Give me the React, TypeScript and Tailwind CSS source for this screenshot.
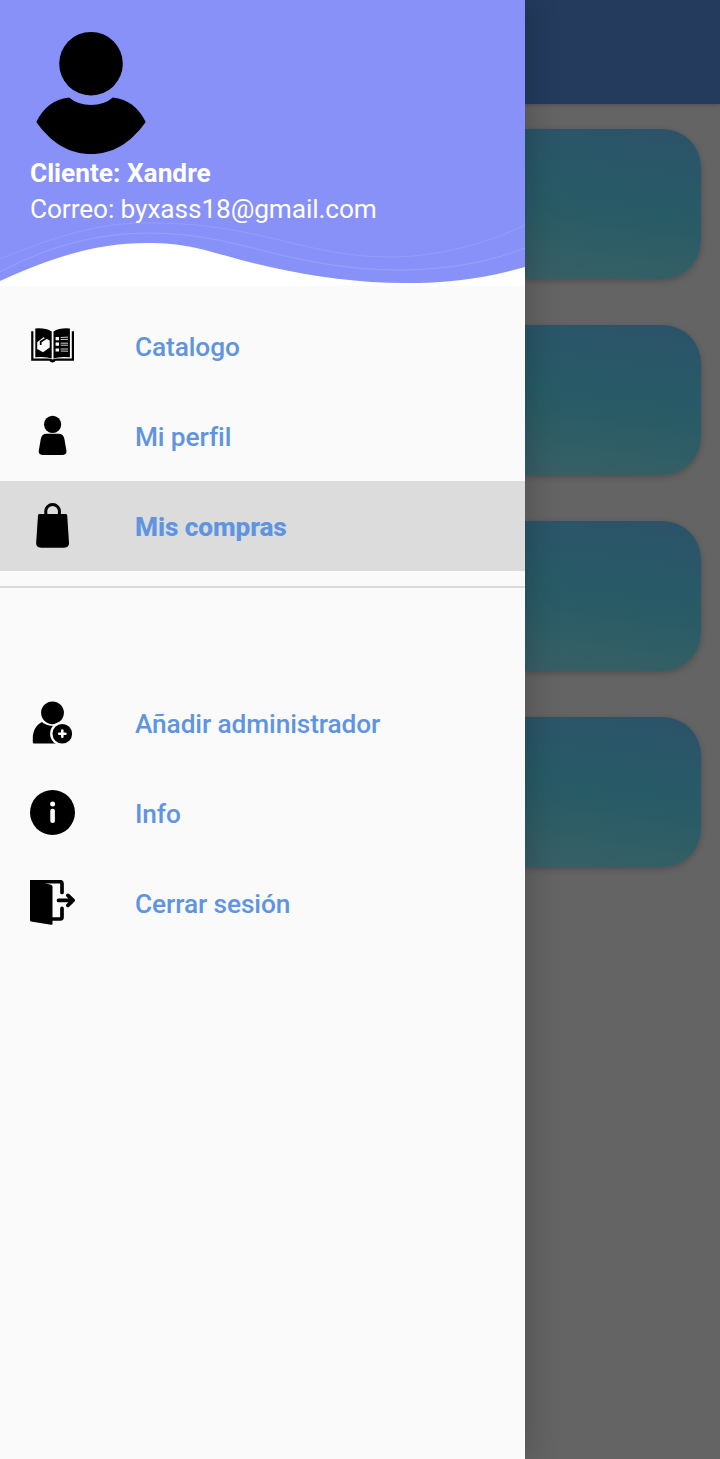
import type { ReactNode } from "react";

const BookIcon = () => (
  <svg className="h-[45px] w-[45px]" viewBox="0 0 45 45">
    <path d="M1.200 8.300h2.200v27.300h14.200q3.500 0 5 .9 1.500-.9 5-.9h14.200V8.300H44v29.500H25.500q-.8 1.600-3 1.600t-3-1.600H1.200z" />
    <path d="M5.300 5.400q10.500-.8 16.400 3.200v27Q16 33.200 5.300 34.300zM39.900 5.400q-10.500-.8-16.400 3.200v27q5.700-2.400 16.400-1.300z" />
    <path fill="#fafafa" d="M7.200 19.200l6.300-4.900 6.200 3.200v7L13 29.300l-5.800-3.400z" />
    <path fill="none" stroke="#000" strokeWidth="1.700" d="M10.700 22v-3.300l6.700-4.200" />
    <path fill="#fafafa" d="M25.600 14h3.400v3.200h-3.400zM25.600 19.600h3.400v3.200h-3.400zM25.600 25.400h3.400v3.200h-3.400z" />
    <path stroke="#cfcfcf" strokeWidth="1" d="M30.700 14.500l7.300-.4M30.700 16.500l7.300-.2M30.700 20.200h7.300M30.700 22.200h7.300M30.700 26h7.300M30.700 28l7.300.2" />
  </svg>
);

const PersonIcon = () => (
  <svg className="h-[45px] w-[45px]" viewBox="0 0 45 45">
    <circle cx="22.600" cy="11.400" r="8.600" />
    <path d="M16.500 20.700h12.200c3.200 0 5 1.800 5.700 5.300l2 11.600c.5 2.800-.9 4.400-3.500 4.400H12.300c-2.600 0-4-1.600-3.500-4.400L10.800 26c.7-3.500 2.500-5.300 5.700-5.300z" />
  </svg>
);

const BagIcon = () => (
  <svg className="h-[45px] w-[45px]" viewBox="0 0 45 45">
    <path fill="none" stroke="#000" strokeWidth="3" d="M15.800 13V8.300a6.800 6.800 0 0 1 13.600 0V13" />
    <path d="M9.600 11h26c1 0 1.500.5 1.600 1.500L39 39.500c.3 3.300-1.600 5.200-5 5.200H11.200c-3.400 0-5.300-1.900-5-5.200L8 12.500c.1-1 .6-1.500 1.600-1.500z" />
  </svg>
);

const AddUserIcon = () => (
  <svg className="h-[45px] w-[45px]" viewBox="0 0 45 45">
    <circle cx="22.500" cy="12.800" r="11.400" />
    <path d="M12 22C6 25 2.800 31 2.800 38.500V42c0 1 .5 1.500 1.500 1.500H26V26c-5.500 0-10-.5-14-4z" />
    <circle cx="32.300" cy="33.700" r="12.200" fill="#fafafa" />
    <circle cx="32.300" cy="33.700" r="9.800" />
    <path stroke="#fafafa" strokeWidth="2.600" strokeLinecap="round" d="M29.200 33.700h6.200M32.300 30.600v6.200" />
  </svg>
);

const InfoIcon = () => (
  <svg className="h-[45px] w-[45px]" viewBox="0 0 45 45">
    <circle cx="22.500" cy="22.500" r="22.500" />
    <circle cx="22.600" cy="14.100" r="2.500" fill="#fafafa" />
    <rect x="20.300" y="18.700" width="4.600" height="14.300" rx="2" fill="#fafafa" />
  </svg>
);

const ExitIcon = () => (
  <svg className="h-[45px] w-[45px]" viewBox="0 0 45 45">
    <path d="M0 0h14l1 3.200 6 1.600q1.500.4 1.500 1.700V44q0 1-1.500.8L1 41.500q-1-.2-1-1.200z" />
    <g fill="none" stroke="#000" strokeWidth="3.700" strokeLinecap="round">
      <path d="M10 1.700h20.300q1.700 0 1.700 1.700V12.500M32 28.300v9q0 1.700-1.700 1.700H22" />
      <path strokeLinejoin="round" d="M28.500 20.400h14.300M37.900 15.400l5.200 5-5.200 5" />
    </g>
  </svg>
);

const Row = ({ icon, label, active = false }: { icon: ReactNode; label: string; active?: boolean }) => (
  <li
    className={
      active
        ? "flex h-[90px] items-start gap-[60px] bg-[#dcdcdc] pl-[30px] pt-[22px] font-extrabold"
        : "flex h-[90px] items-start gap-[60px] pl-[30px] pt-[22px] font-medium"
    }
  >
    {icon}
    <span className="pt-[2px] text-[26.25px] leading-[45px] tracking-[-0.1px] text-[#5f94e1]">{label}</span>
  </li>
);

const Header = () => (
  <header className="relative h-[286px] bg-[#8791f8] pt-[30px] text-white">
    <svg className="absolute bottom-0 left-0 h-[66px] w-[525px]" viewBox="0 220 525 66">
      <path
        fill="#fff"
        d="M0 281C55 256 98 243 148 243S218 256 270 267C315 277 360 283 405 283S485 278 525 267V286H0Z"
      />
      <g fill="none" stroke="#a3acfb" strokeWidth="0.600">
        <path d="M0 272C50 245 100 233 150 233S240 245 285 256C340 268 370 270 405 270C450 269 490 262 525 248" />
        <path strokeOpacity="0.800" d="M0 259C45 241 90 224 140 223S230 228 275 239C320 250 350 257 390 257C440 257 490 242 525 225" />
      </g>
    </svg>
    <svg className="ml-[30px] block h-[125px] w-[122px]" viewBox="30 30 122 125">
      <circle cx="91" cy="63.700" r="31.800" />
      <path d="M36.300 122C43 108 54 99 69 97.500Q78 105 91 105T113 97.500C128 99 139 108 145.700 122C130 144 112 154 91 154S52 144 36.300 122Z" />
    </svg>
    <p className="relative ml-[30px] text-[26.25px] font-bold leading-9">Cliente: Xandre</p>
    <p className="relative ml-[30px] text-[26.25px] leading-9 tracking-[-0.1px]">Correo: byxass18@gmail.com</p>
  </header>
);

const Card = () => (
  <div className="h-[150px] rounded-r-[38px] bg-[linear-gradient(188deg,#2c5369_4%,#275b66_50%,#375f65_96%)] shadow-[0_2px_6px_rgba(0,0,0,0.22)]" />
);

export default function App() {
  return (
    <div className="flex h-[1459px] w-[720px] overflow-hidden bg-[#646464] font-[Roboto,sans-serif]">
      <aside className="z-10 w-[525px] shrink-0 bg-[#fafafa] shadow-[0_0_32px_rgba(0,0,0,0.24)]">
        <Header />
        <nav>
          <ul className="pt-[15px]">
            <Row icon={<BookIcon />} label="Catalogo" />
            <Row icon={<PersonIcon />} label="Mi perfil" />
            <Row icon={<BagIcon />} label="Mis compras" active />
          </ul>
          <div className="mt-[15px] h-[2px] bg-[#dadada]" />
          <ul className="pt-[90px]">
            <Row icon={<AddUserIcon />} label="Añadir administrador" />
            <Row icon={<InfoIcon />} label="Info" />
            <Row icon={<ExitIcon />} label="Cerrar sesión" />
          </ul>
        </nav>
      </aside>
      <main className="flex-1">
        <div className="h-[104px] bg-[#243b5e] shadow-[0_1px_4px_rgba(0,0,0,0.2)]" />
        <div className="flex flex-col gap-[46px] pr-[19px] pt-[25px]">
          <Card />
          <Card />
          <Card />
          <Card />
        </div>
      </main>
    </div>
  );
}
